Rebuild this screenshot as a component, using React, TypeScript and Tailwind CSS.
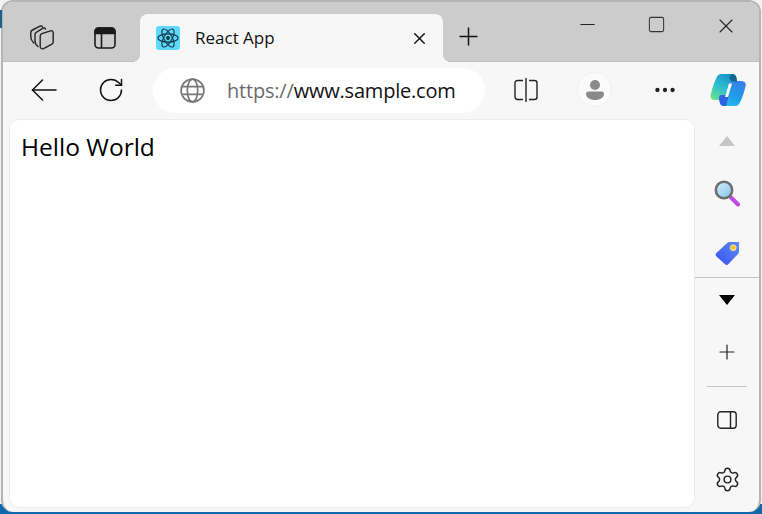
import { Minus, Plus, RotateCw, Settings, Square, X, MoreHorizontal } from 'lucide-react'

const uiFont = { fontFamily: '"Open Sans", "Noto Sans", sans-serif' }

function ReactLogo() {
  return (
    <div className="w-[24px] h-[24px] rounded-[3px] bg-[#5fd8fb] flex items-center justify-center">
      <svg width="22" height="22" viewBox="0 0 24 24" fill="none" stroke="#123a4a" strokeWidth="1.3">
        <ellipse cx="12" cy="12" rx="11" ry="4.4" />
        <ellipse cx="12" cy="12" rx="11" ry="4.4" transform="rotate(60 12 12)" />
        <ellipse cx="12" cy="12" rx="11" ry="4.4" transform="rotate(120 12 12)" />
        <circle cx="12" cy="12" r="2.2" fill="#123a4a" stroke="none" />
      </svg>
    </div>
  )
}

function TabsIcon() {
  return (
    <svg width="24" height="25" viewBox="0 0 24 25" fill="none" stroke="#222" strokeWidth="1.4" strokeLinejoin="round" strokeLinecap="round">
      <path d="M3.8 18 C1.5 16 0.8 14 0.8 12 V7.5 C0.8 6.5 1.5 5.5 2.5 5 L10 1.2 C11 0.7 12 1 12.5 2" />
      <path d="M8 21.5 C6 20 5 18 5 16 V9.5 C5 8.5 5.6 7.6 6.6 7.1 L13 3.2 C14 2.7 15 3 15.5 4" />
      <path d="M10.2 11 C10.2 9.8 10.9 9 11.9 8.6 L20.5 5.8 C21.9 5.4 23.2 6.2 23.2 7.6 V17 C23.2 18.2 22.5 19 21.5 19.4 L13.5 23.6 C12 24.3 10.2 23.3 10.2 21.6 Z" />
    </svg>
  )
}

function VerticalTabsIcon() {
  return (
    <svg width="22" height="22" viewBox="0 0 22 22" fill="none" stroke="#1a1a1a" strokeWidth="1.6">
      <rect x="1" y="1" width="20" height="20" rx="3.5" />
      <path d="M1 4.5 A3.5 3.5 0 0 1 4.5 1 H17.5 A3.5 3.5 0 0 1 21 4.5 V6.5 H1 Z" fill="#1a1a1a" />
      <path d="M7.5 6.5 V21" />
    </svg>
  )
}

function BackIcon() {
  return (
    <svg width="26" height="22" viewBox="0 0 26 22" fill="none" stroke="#111" strokeWidth="1.5" strokeLinecap="round" strokeLinejoin="round">
      <path d="M25 11 H1.5" />
      <path d="M11.5 1 L1.5 11 L11.5 21" />
    </svg>
  )
}

function GlobeIcon() {
  return (
    <svg width="25" height="25" viewBox="0 0 25 25" fill="none" stroke="#777" strokeWidth="1.7">
      <circle cx="12.5" cy="12.5" r="11.4" />
      <ellipse cx="12.5" cy="12.5" rx="5.2" ry="11.4" />
      <path d="M2.4 8.6 H22.6 M2.4 16.4 H22.6" />
    </svg>
  )
}

function SplitIcon() {
  return (
    <svg width="24" height="26" viewBox="0 0 24 26" fill="none" stroke="#222" strokeWidth="1.4">
      <path d="M9 3.5 H3.5 A2.5 2.5 0 0 0 1 6 V20 A2.5 2.5 0 0 0 3.5 22.5 H9" />
      <path d="M15 3.5 H20.5 A2.5 2.5 0 0 1 23 6 V20 A2.5 2.5 0 0 1 20.5 22.5 H15" />
      <path d="M12 1 V25" />
    </svg>
  )
}

function ProfileIcon() {
  return (
    <div className="w-[35px] h-[35px] rounded-full bg-[#fbfbfb] border border-[#f0f0f0] flex items-center justify-center">
      <svg width="18" height="20" viewBox="0 0 18 20" fill="#8a8a8a">
        <circle cx="9" cy="5" r="5" />
        <path d="M2.5 11.5 H15.5 A2.5 2.5 0 0 1 18 14 C18 17.5 14 20 9 20 C4 20 0 17.5 0 14 A2.5 2.5 0 0 1 2.5 11.5 Z" />
      </svg>
    </div>
  )
}

function CopilotIcon() {
  return (
    <svg width="36" height="34" viewBox="0 0 36 34">
      <defs>
        <linearGradient id="cpLeft" x1="0.75" y1="0" x2="0.15" y2="1">
          <stop offset="0" stopColor="#1a8fc8" />
          <stop offset="0.5" stopColor="#2bbcd2" />
          <stop offset="1" stopColor="#6fe08c" />
        </linearGradient>
        <linearGradient id="cpRight" x1="0.8" y1="0" x2="0.2" y2="1">
          <stop offset="0" stopColor="#3a7ee8" />
          <stop offset="0.6" stopColor="#1d9fe8" />
          <stop offset="1" stopColor="#2cc0ec" />
        </linearGradient>
      </defs>
      <path d="M11 1 H22 C24.5 1 26 2.5 26.5 5 L27 9 C27.2 11 26 12 24 12 H21 C20 12 19.4 12.6 19 14 L16 24 C15.4 26 14 27 12 27 H5 C2 27 0 25 0.6 22 C2 16 4 10 6.5 4.5 C7.5 2.2 9 1 11 1 Z" fill="url(#cpLeft)" />
      <path d="M24 8 H31 C34.5 8 36.4 10 35.6 13 C34.2 19 32.4 24.5 30 29.5 C28.8 32 27.2 33 25 33 H14 C11.5 33 10.2 31.6 9.8 29.5 L9 25 C8.8 23 10 22 12 22 H15 C16 22 16.6 21.4 17 20 L20 11 C20.6 9 22 8 24 8 Z" fill="url(#cpRight)" />
      <path d="M9 25 C8.8 23 10 22 12 22 H15 C16 22 16.6 21.4 17 20 L18 26 L16 33 H14 C11.5 33 10.2 31.6 9.8 29.5 Z" fill="#2f62e0" />
      <path d="M22 1 C24.5 1 26 2.5 26.5 5 L27 9 L21 8 L19 5 Z" fill="#14688f" />
      <path d="M19 10.5 H22 L18 24 H15 Z" fill="#ffffff" />
    </svg>
  )
}

function SearchIcon() {
  return (
    <svg width="26" height="27" viewBox="0 0 26 27" fill="none">
      <defs>
        <linearGradient id="lens" x1="0" y1="0" x2="1" y2="1">
          <stop offset="0" stopColor="#d9effb" />
          <stop offset="1" stopColor="#7fc3ee" />
        </linearGradient>
      </defs>
      <path d="M17 17.5 L24 24.5" stroke="#c24ae0" strokeWidth="4" strokeLinecap="round" />
      <circle cx="10" cy="10" r="8.2" fill="url(#lens)" stroke="#6e6e6e" strokeWidth="2.6" />
    </svg>
  )
}

function TagIcon() {
  return (
    <svg width="25" height="25" viewBox="0 0 26 26">
      <defs>
        <linearGradient id="tagFill" x1="1" y1="0" x2="0" y2="1">
          <stop offset="0" stopColor="#5b8df5" />
          <stop offset="1" stopColor="#3b4ff0" />
        </linearGradient>
      </defs>
      <path d="M15 1 H25 V11 C25 12 24.6 12.8 24 13.4 L14 24 C12.8 25.2 11.4 25.2 10.2 24 L1.5 16 C0.4 15 0.4 13.4 1.5 12.4 L12.6 2 C13.3 1.3 14 1 15 1 Z" fill="url(#tagFill)" />
      <circle cx="19" cy="7" r="3" fill="#f7c52e" stroke="#f7e9b0" strokeWidth="1" />
    </svg>
  )
}

function PanelIcon() {
  return (
    <svg width="20" height="18" viewBox="0 0 20 18" fill="none" stroke="#222" strokeWidth="1.4">
      <rect x="0.8" y="0.8" width="18.4" height="16.4" rx="3" />
      <path d="M13.5 0.8 V17.2" />
    </svg>
  )
}

export default function App() {
  return (
    <div className="relative w-[762px] h-[514px] overflow-hidden bg-[linear-gradient(to_bottom,#f2f2f2_0%,#f2f2f2_98%,#0f66a8_98%)]">
      <span className="absolute left-0 top-[10px] w-[2px] h-[18px] bg-[#1f5f8f] z-10" />
      <div className="w-[760px] h-[512px] ml-px flex flex-col rounded-[12px] border-2 border-b-0 border-[#b4b4b4] overflow-hidden bg-[#f7f7f7]" style={uiFont}>
        {/* tab strip */}
        <div className="h-[60px] shrink-0 bg-[#cccccc] border-b border-[#c0c0c0] flex items-end">
          <div className="w-[24px] ml-[27px] mb-[11px]"><TabsIcon /></div>
          <div className="w-[22px] ml-[40px] mb-[12px]"><VerticalTabsIcon /></div>
          <div className="relative w-[303px] h-[48px] ml-[24px] -mb-px bg-[#f7f7f7] rounded-t-[8px] flex items-center pl-[16px] pr-[14px]">
            <span className="absolute left-[-8px] bottom-0 w-[8px] h-[8px] bg-[radial-gradient(circle_at_0_0,transparent_8px,#f7f7f7_8px)]" />
            <span className="absolute right-[-8px] bottom-0 w-[8px] h-[8px] bg-[radial-gradient(circle_at_100%_0,transparent_8px,#f7f7f7_8px)]" />
            <ReactLogo />
            <span className="ml-[15px] text-[17px] text-[#111]">React App</span>
            <X size={19} strokeWidth={1.8} className="ml-auto text-[#111]" />
          </div>
          <Plus size={29} strokeWidth={1.2} className="ml-[11px] mb-[10px] text-[#111]" />
          <div className="flex items-start self-start mt-[13px] ml-[93px]">
            <Minus size={23} strokeWidth={1.1} className="-mt-[2px] text-[#222]" />
            <Square size={19} strokeWidth={1.3} className="ml-[48px] text-[#333]" />
            <X size={24} strokeWidth={1.1} className="-mt-[1px] ml-[48px] text-[#222]" />
          </div>
        </div>

        {/* toolbar */}
        <div className="h-[57px] shrink-0 flex items-center">
          <div className="ml-[28px] mb-[2px]"><BackIcon /></div>
          <RotateCw size={28} strokeWidth={1.3} className="ml-[40px] mb-[2px] text-[#111]" />
          <div className="w-[332px] h-[45px] ml-[28px] rounded-full bg-white flex items-center pl-[27px]">
            <GlobeIcon />
            <span className="ml-[22px] text-[20px] tracking-[-0.2px]">
              <span className="text-[#6b6b6b]">https://</span>
              <span className="text-[#111]">www.sample.com</span>
            </span>
          </div>
          <div className="ml-[29px] mb-[2px]"><SplitIcon /></div>
          <div className="ml-[39px] mb-[2px]"><ProfileIcon /></div>
          <MoreHorizontal size={26} strokeWidth={2} className="ml-[40px] mb-[2px] text-[#222]" />
          <div className="ml-[32px] mb-[2px]"><CopilotIcon /></div>
        </div>

        {/* content and sidebar */}
        <div className="flex-1 flex min-h-0">
          <div className="w-[686px] h-[389px] ml-[6px] rounded-[10px] bg-white border border-[#ececec] pl-[11px] pt-[8px] text-[24.5px] leading-[38px] text-black">
            Hello World
          </div>
          <div className="flex-1 flex flex-col">
            <div className="h-[43px] flex items-center justify-center">
              <div className="w-0 h-0 border-x-[8px] border-x-transparent border-b-[10px] border-b-[#c6c6c6]" />
            </div>
            <div className="h-[62px] flex items-center justify-center"><SearchIcon /></div>
            <div className="h-[53px] pt-[5px] flex items-center justify-center"><TagIcon /></div>
            <div className="border-t border-[#c4c4c4] h-[45px] flex items-center justify-center">
              <div className="w-0 h-0 border-x-[8px] border-x-transparent border-t-[10px] border-t-black" />
            </div>
            <div className="h-[64px] pb-[4px] flex items-center justify-center"><Plus size={24} strokeWidth={1.2} className="text-[#222]" /></div>
            <div className="mx-[12px] border-t border-[#c4c4c4]" />
            <div className="h-[66px] flex items-center justify-center"><PanelIcon /></div>
            <div className="h-[53px] flex items-center justify-center"><Settings size={27} strokeWidth={1.3} className="text-[#222]" /></div>
          </div>
        </div>
      </div>
    </div>
  )
}
